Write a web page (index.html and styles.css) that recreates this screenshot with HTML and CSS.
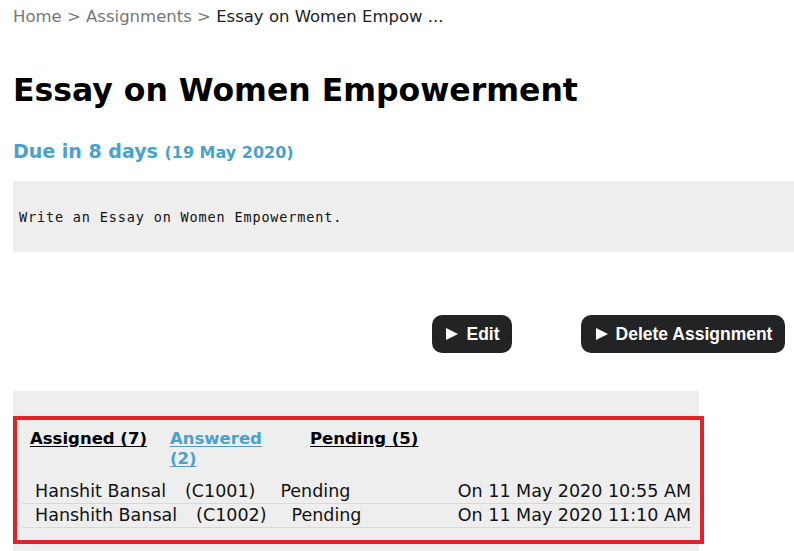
FILE: index.html
```html
<!DOCTYPE html>
<html>
<head>
<meta charset="utf-8">
<link rel="stylesheet" href="styles.css">
</head>
<body>
<nav class="crumbs"><a class="crumb-link">Home</a> &gt; <a class="crumb-link">Assignments</a> &gt; <span class="crumb-current">Essay on Women Empow ...</span></nav>
<h1 class="title">Essay on Women Empowerment</h1>
<div class="due">Due in 8 days <span class="due-date">(19 May 2020)</span></div>
<div class="desc">Write an Essay on Women Empowerment.</div>
<div class="actions">
  <button class="btn btn-edit"><span class="tri"></span>Edit</button>
  <button class="btn btn-delete"><span class="tri"></span>Delete Assignment</button>
</div>
<section class="panel">
  <div class="highlight">
    <div class="tabs">
      <a class="tab">Assigned (7)</a>
      <a class="tab tab-active">Answered (2)</a>
      <a class="tab">Pending (5)</a>
    </div>
    <div class="rows">
      <div class="row"><span class="name">Hanshit Bansal</span><span class="code">(C1001)</span><span class="status">Pending</span><span class="date">On 11 May 2020 10:55 AM</span></div>
      <div class="row"><span class="name">Hanshith Bansal</span><span class="code">(C1002)</span><span class="status">Pending</span><span class="date">On 11 May 2020 11:10 AM</span></div>
    </div>
  </div>
</section>
</body>
</html>
```
FILE: styles.css
```css
html, body { margin: 0; padding: 0; background: #fff; }
body {
  padding: 0 0 0 13px;
  font-family: "DejaVu Sans", Verdana, sans-serif;
  color: #111;
  overflow: hidden;
}
.crumbs {
  font-size: 16.5px;
  line-height: 20px;
  padding-top: 7px;
  color: #777;
}
.crumb-link { color: #777; }
.crumb-current { color: #222; }
.title {
  margin: 0;
  margin-top: 43px;
  font-size: 31.5px;
  line-height: 40px;
  font-weight: bold;
  color: #000;
}
.due {
  margin-top: 29px;
  font-size: 19px;
  line-height: 24px;
  font-weight: bold;
  color: #4aa2cc;
}
.due-date { font-size: 16px; }
.desc {
  margin-top: 16px;
  background: #eeeeee;
  height: 71px;
  display: flex;
  align-items: center;
  padding-left: 6px;
  font-family: "DejaVu Sans Mono", monospace;
  font-size: 13.5px;
  letter-spacing: 0.85px;
  color: #111;
}
.actions {
  display: flex;
  margin-top: 63px;
  padding-left: 419px;
  gap: 69px;
}
.btn {
  font-family: "Liberation Sans", Arial, sans-serif;
  font-weight: bold;
  font-size: 17.5px;
  color: #fff;
  background: #222325;
  border: 0;
  border-radius: 10px;
  height: 38px;
  padding: 0 12px 0 14px;
  display: flex;
  align-items: center;
  justify-content: center;
}
.tri {
  display: inline-block;
  width: 0;
  height: 0;
  border-top: 6.5px solid transparent;
  border-bottom: 6.5px solid transparent;
  border-left: 12px solid #fff;
  margin-right: 8px;
}
.btn-edit { width: 80px; }
.btn-delete { width: 204px; }
.panel {
  margin-top: 38px;
  width: 686px;
  background: #eeeeee;
  padding-top: 25px;
  height: 135px;
}
.highlight {
  width: 691px;
  border: 4px solid #e0232b;
  box-sizing: border-box;
  height: 128px;
  padding: 9px 9px 0 5px;
}
.tabs {
  display: flex;
  padding-left: 8px;
  font-family: "DejaVu Sans", Verdana, sans-serif;
  font-weight: bold;
  font-size: 16.5px;
  line-height: 20px;
}
.tab {
  width: 140px;
  color: #000;
  text-decoration: underline;
  text-underline-offset: 2px;
}
.tab-active { color: #4aa2cc; width: 100px; margin-right: 40px; }
.rows { margin-top: 11px; }
.row {
  display: flex;
  font-size: 17.5px;
  line-height: 23px;
  border-bottom: 1px solid #d8d8d8;
  padding-left: 13px;
  color: #111;
}
.name { margin-right: 19px; }
.code { margin-right: 25px; }
.date { margin-left: auto; }
```
